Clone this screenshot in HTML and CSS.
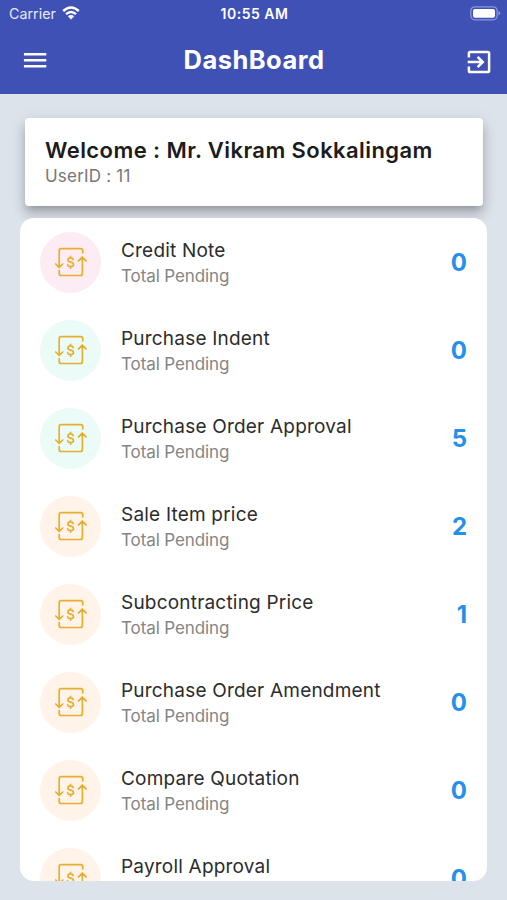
FILE: index.html
```html
<!DOCTYPE html>
<html lang="en">
<head>
<meta charset="utf-8">
<title>DashBoard</title>
<link rel="stylesheet" href="styles.css">
</head>
<body>
<svg width="0" height="0" class="defs">
  <symbol id="exchange" viewBox="0 0 61 61">
    <path d="M42.7 21v-2.3q0-2-2-2H21.2q-2 0-2 2v16.8M15.8 32l3.4 3.5 3.6-3.5M19.2 38.7v2.8q0 2 2 2h19.2q2 0 2-2V25.2M38.5 28.9l3.8-3.8 3.8 3.8"/>
    <path d="M33.2 27.5c-.4-1.1-1.4-1.6-2.6-1.6-1.6 0-2.7.8-2.7 2.1 0 3 5.6 1.3 5.6 4.4 0 1.4-1.2 2.2-2.9 2.2-1.5 0-2.6-.6-3-1.9M30.6 24.4v1.5M30.6 34.6v1.6"/>
  </symbol>
</svg>
<header class="header">
  <div class="status">
    <div class="carrier"><span>Carrier</span>
      <svg class="wifi" viewBox="0 0 18 14"><path d="M1.2 5Q9-2.2 16.8 5M4 8.2Q9 3.6 14 8.2"/><path class="dot" d="M9 13.5 5.8 10.2Q9 7.8 12.2 10.2Z"/></svg>
    </div>
    <span class="time">10:55 AM</span>
    <svg class="battery" viewBox="0 0 31 15"><rect class="shell" x=".8" y=".8" width="26.4" height="13" rx="4"/><rect x="3" y="3" width="22" height="8.8" rx="2"/><path class="tip" d="M28.5 5q1.8.8 1.8 2.3t-1.8 2.3Z"/></svg>
  </div>
  <div class="bar">
    <svg class="menu" viewBox="0 0 24 18"><path d="M.9 3.2h22.4M.9 9.2h22.4M.9 15.2h22.4"/></svg>
    <h1>DashBoard</h1>
    <svg class="exit" viewBox="0 0 24 24"><path d="M1.9 7.6V3.2q0-1.3 1.3-1.3h17.6q1.3 0 1.3 1.3v17.6q0 1.3-1.3 1.3H3.2q-1.3 0-1.3-1.3v-4.4M.7 12h14.6M10.6 6.8l5.2 5.2-5.2 5.2"/></svg>
  </div>
</header>
<main>
  <section class="welcome">
    <h2>Welcome : Mr. Vikram Sokkalingam</h2>
    <p>UserID : 11</p>
  </section>
  <ul class="list">
    <li><span class="badge pink"><svg><use href="#exchange"/></svg></span><div class="text"><h3>Credit Note</h3><p>Total Pending</p></div><b>0</b></li>
    <li><span class="badge mint"><svg><use href="#exchange"/></svg></span><div class="text"><h3>Purchase Indent</h3><p>Total Pending</p></div><b>0</b></li>
    <li><span class="badge mint"><svg><use href="#exchange"/></svg></span><div class="text"><h3>Purchase Order Approval</h3><p>Total Pending</p></div><b>5</b></li>
    <li><span class="badge peach"><svg><use href="#exchange"/></svg></span><div class="text"><h3>Sale Item price</h3><p>Total Pending</p></div><b>2</b></li>
    <li><span class="badge peach"><svg><use href="#exchange"/></svg></span><div class="text"><h3>Subcontracting Price</h3><p>Total Pending</p></div><b>1</b></li>
    <li><span class="badge peach"><svg><use href="#exchange"/></svg></span><div class="text"><h3>Purchase Order Amendment</h3><p>Total Pending</p></div><b>0</b></li>
    <li><span class="badge peach"><svg><use href="#exchange"/></svg></span><div class="text"><h3>Compare Quotation</h3><p>Total Pending</p></div><b>0</b></li>
    <li><span class="badge peach"><svg><use href="#exchange"/></svg></span><div class="text"><h3>Payroll Approval</h3><p>Total Pending</p></div><b>0</b></li>
  </ul>
</main>
</body>
</html>
```

FILE: styles.css
```css
* { box-sizing: border-box; margin: 0; padding: 0; }
body { width: 507px; height: 900px; overflow: hidden; background: #dde3eb; font-family: Inter, "Liberation Sans", sans-serif; }
svg { display: block; fill: none; }
.defs { position: absolute; }
.header { height: 94px; background: #3f51b5; color: #fff; }
.status { height: 28px; padding: 0 7px 0 9px; display: grid; grid-template-columns: 1fr auto 1fr; align-items: center; font-size: 14.3px; line-height: 28px; }
.carrier { display: flex; align-items: center; gap: 6px; color: #e6e9fa; letter-spacing: 0; }
.wifi { width: 18px; height: 14px; margin-top: -2px; stroke: #fff; stroke-width: 2.4; }
.wifi .dot { fill: #fff; stroke: none; }
.time { font-weight: 600; font-size: 14px; letter-spacing: .5px; }
.battery { width: 31px; height: 15px; justify-self: end; margin: -1px -1px 0 0; fill: #fff; }
.battery .shell { fill: none; stroke: #8b97d5; stroke-width: 1.3; }
.battery .tip { fill: #8b97d5; }
.bar { height: 66px; padding: 0 16px 2px 23px; display: grid; grid-template-columns: 24px 1fr 24px; align-items: center; }
.menu { width: 24px; height: 18px; stroke: #fff; stroke-width: 2.5; }
.bar h1 { font-size: 25.5px; line-height: 30px; font-weight: 700; letter-spacing: .45px; text-align: center; padding-right: 6px; }
.exit { width: 24px; height: 24px; margin-top: 3px; stroke: #fff; stroke-width: 2.5; }
main { padding: 24px 20px 0; }
.welcome { height: 88px; margin: 0 4px 0 5px; padding: 18px 20px; border-radius: 4px; background: #fff; box-shadow: 0 5px 6px -3px rgba(0,0,0,.2), 0 9px 12px 1px rgba(0,0,0,.14), 0 3px 16px 2px rgba(0,0,0,.08); }
.welcome h2 { font-size: 22px; line-height: 28px; font-weight: 600; letter-spacing: .42px; color: #1c1c1c; white-space: nowrap; }
.welcome p { font-size: 17px; line-height: 25px; letter-spacing: .2px; color: #777; }
.list { position: relative; list-style: none; height: 663px; margin-top: 12px; overflow: hidden; border-radius: 14px; background: #fff; }
.list li { height: 88px; padding: 0 20px; display: flex; align-items: center; }
.badge { width: 61px; height: 61px; border-radius: 50%; }
.badge svg { width: 61px; height: 61px; stroke: #e5b02e; stroke-width: 1.7; stroke-linecap: round; stroke-linejoin: round; }
.pink { background: #fdecf4; }
.mint { background: #ebfbf7; }
.peach { background: #fff3ea; }
.text { flex: 1; margin-left: 20px; padding-top: 2px; white-space: nowrap; }
.text h3 { font-size: 19px; line-height: 26px; font-weight: 400; letter-spacing: .2px; color: #2c2c2c; }
.text p { font-size: 17px; line-height: 24px; letter-spacing: -.1px; color: #858585; }
.list b { font-size: 24px; line-height: 30px; padding-top: 1px; font-weight: 700; color: #2490ea; }
```
